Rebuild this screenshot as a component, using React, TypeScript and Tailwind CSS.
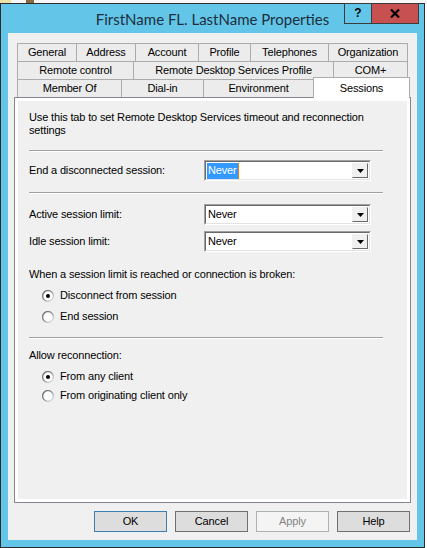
import React from "react";

const row1 = [
  { label: "General", w: "w-[59px]" },
  { label: "Address", w: "w-[59px]" },
  { label: "Account", w: "w-[63px]" },
  { label: "Profile", w: "w-[52px]" },
  { label: "Telephones", w: "w-[78px]" },
  { label: "Organization", w: "w-[80px]" },
];

const row2 = [
  { label: "Remote control", w: "w-[116px]" },
  { label: "Remote Desktop Services Profile", w: "w-[200px]" },
  { label: "COM+", w: "w-[75px]" },
];

const row3 = [
  { label: "Member Of", w: "w-[104px]" },
  { label: "Dial-in", w: "w-[82px]" },
  { label: "Environment", w: "w-[110px]" },
];

const TabRow = ({ tabs, closed }: { tabs: { label: string; w: string }[]; closed: boolean }) => (
  <>
    {tabs.map((t, i) => (
      <div
        key={t.label}
        className={`${t.w} h-[18px] flex items-center justify-center border-t border-l border-[#acacac] bg-[#ececec] ${
          closed && i === tabs.length - 1 ? "border-r" : ""
        }`}
      >
        {t.label}
      </div>
    ))}
  </>
);

const Separator = ({ className }: { className: string }) => (
  <div className={`w-[354px] h-[2px] border-t border-[#a0a0a0] border-b border-b-white ${className}`} />
);

const Combo = ({ selected }: { selected?: boolean }) => (
  <div className="w-[167px] h-[21px] border border-t-[#a0a0a0] border-l-[#a0a0a0] border-b-white border-r-white">
    <div className="flex h-full border border-t-[#696969] border-l-[#696969] border-b-[#e3e3e3] border-r-[#e3e3e3] bg-white">
      <div className="flex-1 flex items-center pl-[1px]">
        {selected ? (
          <span className="flex items-center h-[16px] bg-[#3399ff] text-white pl-[1px]">
            Never
            <span className="w-px h-[16px] bg-[#f07800] ml-[1px]" />
          </span>
        ) : (
          <span className="pl-[1px]">Never</span>
        )}
      </div>
      <div className="w-[16px] my-[1px] mr-[1px] border border-t-[#f0f0f0] border-l-[#f0f0f0] border-b-[#696969] border-r-[#696969] bg-[#f0f0f0] flex items-center justify-center">
        <svg width="7" height="4" viewBox="0 0 7 4">
          <path d="M0 0h7L3.5 4z" fill="#000" />
        </svg>
      </div>
    </div>
  </div>
);

const Radio = ({ checked, label, className }: { checked?: boolean; label: string; className: string }) => (
  <div className={`flex items-center h-[17px] pl-[13px] ${className}`}>
    <svg width="12" height="12" viewBox="0 0 12 12">
      <defs>
        <linearGradient id="rg" x1="0" y1="0" x2="1" y2="1">
          <stop offset="0" stopColor="#5f5f5f" />
          <stop offset="0.5" stopColor="#9a9a9a" />
          <stop offset="1" stopColor="#f4f4f4" />
        </linearGradient>
      </defs>
      <circle cx="6" cy="6" r="5.4" fill="#fff" stroke="url(#rg)" strokeWidth="1.4" />
      {checked && <circle cx="6" cy="6" r="2" fill="#000" />}
    </svg>
    <span className="ml-[6px]">{label}</span>
  </div>
);

const Button = ({ label, kind }: { label: string; kind: "default" | "normal" | "disabled" }) => {
  const cls =
    kind === "default"
      ? "border-[#3c7fb1] bg-[#dddddd] text-black"
      : kind === "disabled"
      ? "border-[#adb2b5] bg-[#f4f4f4] text-[#838383]"
      : "border-[#707070] bg-[#dddddd] text-black";
  return (
    <div className={`w-[73px] h-[21px] border flex items-center justify-center ${cls}`}>{label}</div>
  );
};

export default function App() {
  return (
    <div className="w-[427px] h-[548px] flex flex-col bg-white overflow-hidden font-['Liberation_Sans',Arial,sans-serif] text-[11px] leading-[13px] tracking-[-0.15px] text-black">
      {/* desktop peeking above the window */}
      <div className="h-[3px] flex bg-[#f7f7f7]">
        <div className="w-[11px] bg-[#efe2a6]" />
        <div className="w-[8px] ml-[15px] bg-[#8a6a40]" />
      </div>

      <div className="flex flex-1">
        <div className="w-[425px] h-[545px] flex flex-col border border-[#2c2c2c] bg-[#63c6e8]">
          {/* title bar */}
          <div className="h-[29px] grid grid-cols-[1fr_auto_1fr]">
            <div />
            <div className="flex items-center pt-[1px] font-['Lato',sans-serif] text-[15px] tracking-normal text-[#1e2e3c] whitespace-nowrap">
              FirstName FL. LastName Properties
            </div>
            <div className="flex justify-end items-start pr-[5px] -mt-px">
              <div className="w-[28px] h-[21px] border border-[#3b3b3b] flex items-center justify-center font-bold text-[12px] tracking-normal">
                ?
              </div>
              <div className="w-[47px] h-[21px] border border-l-0 border-[#3b3b3b] bg-[#c75050] flex items-center justify-center">
                <svg width="10" height="9" viewBox="0 0 10 9">
                  <path d="M1 0.5l8 8M9 0.5l-8 8" stroke="#000" strokeWidth="2.2" />
                </svg>
              </div>
            </div>
          </div>

          {/* client area */}
          <div className="flex-1 mx-[7px] mb-[7px] bg-[#f0f0f0] flex flex-col px-[6px] pt-[10px]">
            <div className="flex flex-col pl-[3px]">
              <div className="flex">
                <TabRow tabs={row1} closed />
              </div>
              <div className="flex">
                <TabRow tabs={row2} closed />
              </div>
              <div className="flex items-end h-[18px]">
                <TabRow tabs={row3} closed={false} />
                <div className="w-[97px] h-[21px] -mb-px relative z-10 flex items-center justify-center border-t border-l border-r border-[#acacac] bg-white">
                  Sessions
                </div>
              </div>
            </div>

            {/* tab page */}
            <div className="h-[406px] border border-[#828790] bg-white p-[3px]">
              <div className="h-full bg-[#f0f0f0] flex flex-col pl-[11px] pt-[10px]">
                <p>
                  Use this tab to set Remote Desktop Services timeout and reconnection
                  <br />
                  settings
                </p>
                <Separator className="mt-[13px]" />

                <div className="flex items-center mt-[8px]">
                  <span className="w-[175px]">End a disconnected session:</span>
                  <Combo selected />
                </div>
                <Separator className="mt-[11px]" />

                <div className="flex items-center mt-[10px]">
                  <span className="w-[175px]">Active session limit:</span>
                  <Combo />
                </div>
                <div className="flex items-center mt-[6px]">
                  <span className="w-[175px]">Idle session limit:</span>
                  <Combo />
                </div>

                <p className="mt-[16px]">When a session limit is reached or connection is broken:</p>
                <Radio checked label="Disconnect from session" className="mt-[6px]" />
                <Radio label="End session" className="mt-[4px]" />
                <Separator className="mt-[12px]" />

                <p className="mt-[10px]">Allow reconnection:</p>
                <Radio checked label="From any client" className="mt-[6px]" />
                <Radio label="From originating client only" className="mt-[2px]" />
              </div>
            </div>

            <div className="flex justify-end gap-[8px] pr-[1px] mt-[8px]">
              <Button label="OK" kind="default" />
              <Button label="Cancel" kind="normal" />
              <Button label="Apply" kind="disabled" />
              <Button label="Help" kind="normal" />
            </div>
          </div>
        </div>
        <div className="flex-1 bg-white" />
      </div>
    </div>
  );
}
